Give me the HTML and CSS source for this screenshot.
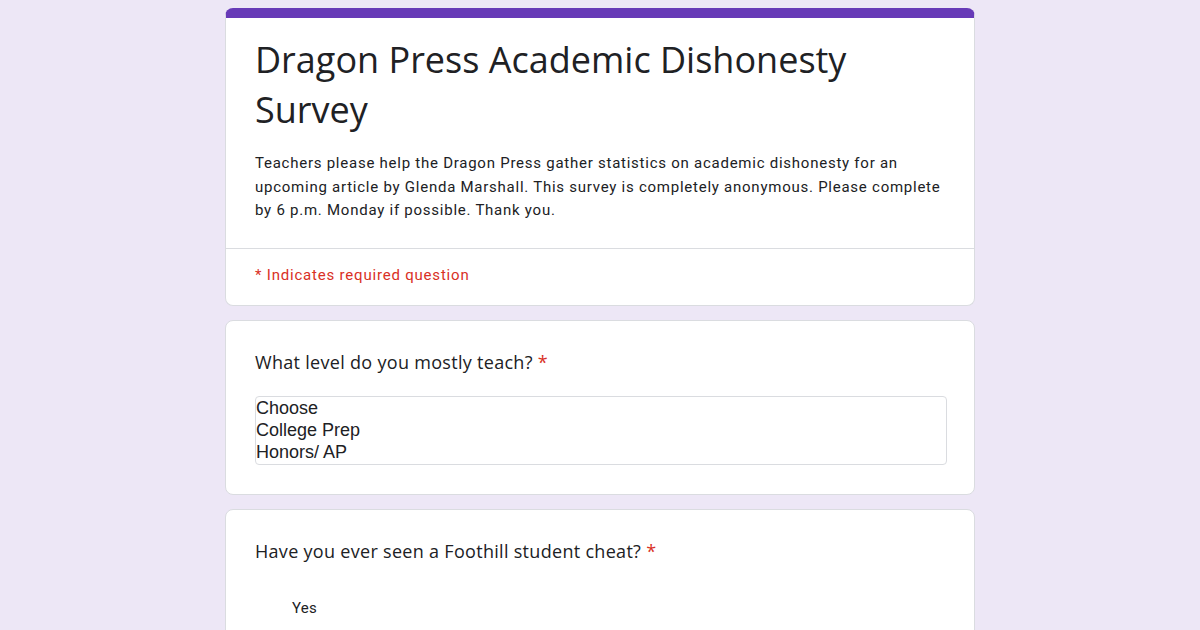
FILE: index.html
```html
<!DOCTYPE html>
<html lang="en">
<head>
  <meta charset="UTF-8" />
  <meta name="viewport" content="width=device-width, initial-scale=1" />
  <title>Dragon Press Academic Dishonesty Survey</title>
  <link rel="stylesheet" href="styles.css">
</head>
<body>

  <div class="form">

    <!-- Header card -->
    <div class="card card-header">
      <div class="header-body">
        <h1 class="form-title">Dragon Press Academic Dishonesty Survey</h1>
        <p class="form-desc">Teachers please help the Dragon Press gather statistics on academic dishonesty for an upcoming article by Glenda Marshall. This survey is completely anonymous. Please complete by 6 p.m. Monday if possible. Thank you.</p>
      </div>
      <div class="required-note">* Indicates required question</div>
    </div>

    <!-- Question: level -->
    <div class="card question">
      <div class="q-title">What level do you mostly teach? <span class="req">*</span></div>
      <div class="listbox">
        <div class="option">Choose</div>
        <div class="option">College Prep</div>
        <div class="option">Honors/ AP</div>
      </div>
    </div>

    <!-- Question: cheat -->
    <div class="card question">
      <div class="q-title">Have you ever seen a Foothill student cheat? <span class="req">*</span></div>
      <div class="choices">
        <div class="choice">Yes</div>
        <div class="choice">No</div>
      </div>
    </div>

  </div>

</body>
</html>
```

FILE: styles.css
```css
body {
  margin: 0;
  background: #ede7f6;
  font-family: Roboto, Arial, sans-serif;
  color: #202124;
}

.form {
  width: 750px;
  margin: 8px auto 0;
  display: flex;
  flex-direction: column;
  gap: 14px;
}

/* Cards */
.card {
  background: white;
  border: 1px solid #dadce0;
  border-radius: 8px;
}

.card-header {
  border-top: 10px solid #673ab7;
}

.header-body {
  padding: 17px 29px 25px;
  border-bottom: 1px solid #dadce0;
}

.form-title {
  font-family: "Open Sans", sans-serif;
  font-weight: 400;
  font-size: 36px;
  line-height: 50px;
  margin: 0 0 17px;
}

.form-desc {
  font-size: 15px;
  line-height: 23.5px;
  letter-spacing: 0.75px;
  margin: 0;
}

.required-note {
  color: #d93025;
  font-size: 15px;
  line-height: 20px;
  letter-spacing: 0.8px;
  padding: 16px 29px 20px;
}

/* Questions */
.question {
  padding: 29px 29px 29px;
}

.q-title {
  font-family: "Open Sans", sans-serif;
  font-size: 18px;
  line-height: 24px;
  letter-spacing: 0.3px;
  margin-bottom: 22px;
}

.req {
  color: #d93025;
}

.listbox {
  width: 690px;
  padding-bottom: 1px;
  border: 1px solid #dadce0;
  border-radius: 4px;
  font-family: "Liberation Sans", Arial, sans-serif;
  font-size: 18px;
}

.option {
  line-height: 22px;
}

.choices {
  padding-left: 37px;
}

.choice {
  font-size: 15px;
  line-height: 20px;
  letter-spacing: 0.3px;
  padding: 13px 0 12px;
}
```
